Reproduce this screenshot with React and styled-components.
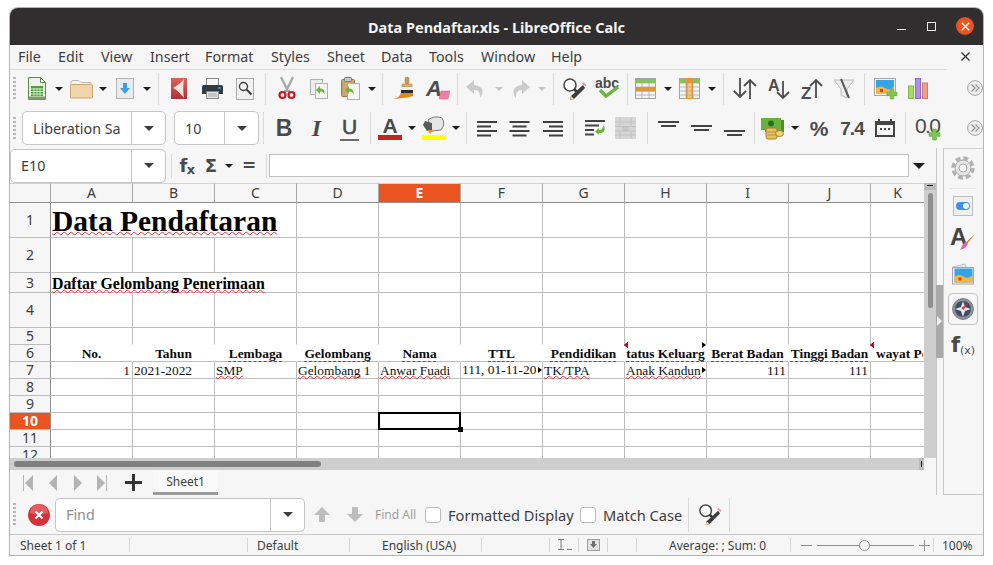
import React from 'react';
import styled, { createGlobalStyle } from 'styled-components';

const UI = '"Noto Sans", "Open Sans", sans-serif';
const SHEET = '"Liberation Serif", serif';

const Global = createGlobalStyle`
  html, body { margin: 0; padding: 0; background: #fff; }
  body { width: 993px; height: 565px; overflow: hidden; font-family: ${UI}; color: #3d3d3d; }
  svg { overflow: visible; }
`;

const Win = styled.div`
  width: 973px;
  height: 547px;
  margin: 8px 0 0 10px;
  display: flex;
  flex-direction: column;
  background: #f6f6f6;
  border-radius: 8px 8px 0 0;
  box-shadow: 0 0 0 1px #b4b4b4;
`;

const TitleBar = styled.header`
  height: 37px;
  flex: none;
  background: #302e2e;
  border-radius: 8px 8px 0 0;
  display: flex;
  align-items: center;
  justify-content: center;
  position: relative;
  color: #f4f4f4;
  font-size: 14.5px;
  font-weight: 700;
`;

const WinControls = styled.div`
  position: absolute;
  top: 0;
  right: 0;
  height: 36px;
  display: flex;
  align-items: center;
`;

const WinButton = styled.span`
  width: 30px;
  display: flex;
  justify-content: center;
`;

const CloseDot = styled.span`
  width: 18px;
  height: 18px;
  margin: 0 9px 0 10px;
  border-radius: 50%;
  background: #e95420;
  display: flex;
  align-items: center;
  justify-content: center;
`;

const MenuBar = styled.nav`
  height: 25px;
  flex: none;
  box-sizing: border-box;
  padding: 0 0 2px 8px;
  display: flex;
  align-items: center;
  position: relative;
  font-size: 14.3px;
  &::after {
    content: '';
    position: absolute;
    left: 0;
    bottom: 0;
    width: 937px;
    height: 1px;
    background: #dcdcdc;
  }
`;

const MenuItem = styled.span`
  width: ${(p) => p.$w}px;
  flex: none;
`;

const MenuClose = styled.span`
  position: absolute;
  right: 13px;
  top: 7px;
  line-height: 0;
`;

const ToolRow = styled.div`
  height: ${(p) => p.$h}px;
  flex: none;
  box-sizing: border-box;
  padding-bottom: ${(p) => p.$pb}px;
  display: flex;
  align-items: center;
  position: relative;
`;

const Grip = styled.span`
  width: 3px;
  height: 23px;
  margin: 0 6px 0 3px;
  flex: none;
  background: repeating-linear-gradient(#b5b5b5 0 2px, transparent 2px 4px);
`;

const Tool = styled.span`
  width: ${(p) => p.$w}px;
  height: 100%;
  flex: none;
  display: flex;
  align-items: center;
  justify-content: center;
  line-height: 0;
`;

const Drop = styled.span`
  width: ${(p) => p.$w}px;
  flex: none;
  display: flex;
  justify-content: center;
  &::before {
    content: '';
    border: ${(p) => (p.$big ? 6 : 4)}px solid transparent;
    border-bottom-width: 0;
    border-top: ${(p) => (p.$big ? 6 : 4)}px solid ${(p) => (p.$muted ? '#c4c4c4' : '#1c1c1c')};
  }
`;

const Sep = styled.span`
  width: ${(p) => p.$w}px;
  height: ${(p) => p.$h || 32}px;
  flex: none;
  display: flex;
  justify-content: center;
  &::before {
    content: '';
    width: 1px;
    background: #dadada;
  }
`;

const More = styled.span`
  position: absolute;
  right: 0;
  top: 10px;
  width: 16px;
  height: 16px;
  line-height: 0;
`;

const Combo = styled.div`
  width: ${(p) => p.$w}px;
  height: 34px;
  flex: none;
  display: flex;
  align-items: stretch;
  background: #fff;
  border: 1px solid #c6c6c6;
  border-radius: 5px;
  box-sizing: border-box;
  margin-left: ${(p) => p.$ml || 0}px;
  font-size: 14.3px;
`;

const ComboText = styled.span`
  flex: 1;
  padding-left: 10px;
  display: flex;
  align-items: center;
  overflow: hidden;
  white-space: nowrap;
  color: ${(p) => p.$color || '#3d3d3d'};
`;

const ComboArrow = styled.span`
  width: ${(p) => p.$w}px;
  flex: none;
  display: flex;
  align-items: center;
  justify-content: center;
  border-left: 1px solid #c6c6c6;
  &::before {
    content: '';
    border: 5px solid transparent;
    border-bottom-width: 0;
    border-top: 5px solid #3d3d3d;
  }
`;

const Glyph = styled.span`
  font-family: ${(p) => p.$font || '"Liberation Sans", sans-serif'};
  font-size: ${(p) => p.$size}px;
  font-weight: ${(p) => p.$weight || 700};
  font-style: ${(p) => (p.$italic ? 'italic' : 'normal')};
  color: ${(p) => p.$color || '#4a4a4a'};
  letter-spacing: ${(p) => p.$ls || 0}px;
  line-height: 1;
  white-space: nowrap;
`;

const Underlined = styled(Glyph)`
  border-bottom: 2px solid #6d6d6d;
  padding: 0 2px 2px;
  font-weight: 400;
  -webkit-text-stroke: 0.6px #4a4a4a;
`;

const Sub = styled.sub`
  font-size: ${(p) => p.$size}px;
  font-weight: ${(p) => p.$weight || 700};
  line-height: 0;
  vertical-align: -2px;
`;

const Workspace = styled.div`
  flex: none;
  height: 347px;
  display: flex;
`;

const LeftPane = styled.div`
  width: 926px;
  flex: none;
  display: flex;
  flex-direction: column;
`;

const FormulaBar = styled.div`
  height: 35px;
  flex: none;
  display: flex;
  align-items: center;
`;

const FormulaInput = styled.div`
  width: 640px;
  height: 23px;
  flex: none;
  background: #fff;
  border: 1px solid #c2c2c2;
  box-sizing: border-box;
`;

const SheetRow = styled.div`
  height: 275px;
  flex: none;
  display: flex;
`;

const Sheet = styled.div`
  width: 914px;
  height: 275px;
  flex: none;
  display: grid;
  grid-template-columns: 41px repeat(10, 82px) 54px;
  grid-template-rows: 20px 35px 35px 20px 35px repeat(8, 17px);
  overflow: hidden;
  background: #fff;
`;

const HeadCell = styled.div`
  box-sizing: border-box;
  display: flex;
  align-items: center;
  justify-content: center;
  font-size: 14px;
  line-height: 1;
  background: ${(p) => (p.$active ? '#e95420' : '#f6f6f6')};
  color: ${(p) => (p.$active ? '#fff' : '#3d3d3d')};
  font-weight: ${(p) => (p.$active ? 700 : 400)};
`;

const ColHead = styled(HeadCell)`
  border-right: 1px solid #a8a8a8;
  border-bottom: 1px solid #8e8e8e;
  border-top: 1px solid #d2d2d2;
`;

const RowHead = styled(HeadCell)`
  border-right: 1px solid #8e8e8e;
  border-bottom: 1px solid #bdbdbd;
`;

const Cell = styled.div`
  position: relative;
  box-sizing: border-box;
  min-width: 0;
  grid-column: ${(p) => (p.$span ? `span ${p.$span}` : 'auto')};
  border-right: 1px solid ${(p) => (p.$noRight ? '#fff' : '#bdbdbd')};
  border-bottom: 1px solid ${(p) => (p.$noBottom ? '#fff' : '#bdbdbd')};
  display: flex;
  align-items: flex-end;
  justify-content: ${(p) => p.$justify || 'flex-start'};
  padding: 0 ${(p) => (p.$justify === 'flex-end' ? 2 : 1)}px 0 1px;
  font-family: ${SHEET};
  font-size: 13.4px;
  line-height: 15px;
  color: #111;
  white-space: nowrap;
`;

const Clip = styled.span`
  overflow: hidden;
  display: block;
  padding-bottom: 1px;
`;

const Title = styled.span`
  align-self: center;
  margin-top: ${(p) => p.$mt}px;
  font-weight: 700;
  font-size: ${(p) => p.$size}px;
  line-height: 1.1;
  color: #000;
  text-decoration: underline wavy #e8343c;
  text-decoration-thickness: 1.3px;
  text-decoration-skip-ink: none;
  text-underline-offset: 0;
`;

const Spell = styled.span`
  text-decoration: underline wavy #e8343c;
  text-decoration-thickness: 1.3px;
  text-decoration-skip-ink: none;
  text-underline-offset: 0;
`;

const Heading = styled.span`
  flex: 1;
  min-width: 0;
  margin-bottom: -1px;
  padding-left: ${(p) => (p.$align ? 4 : 0)}px;
  overflow: hidden;
  text-align: ${(p) => p.$align || 'center'};
  font-weight: 700;
  color: #0b0b0b;
  line-height: 17px;
  text-decoration: ${(p) => (p.$spell ? 'underline dashed #d22' : 'none')};
  text-decoration-thickness: 1px;
  text-underline-offset: 3px;
`;

const Selection = styled.span`
  position: absolute;
  inset: -1px;
  border: 2px solid #000;
  z-index: 2;
  &::after {
    content: '';
    position: absolute;
    right: -4px;
    bottom: -4px;
    width: 5px;
    height: 5px;
    background: #000;
  }
`;

const Mark = styled.span`
  position: absolute;
  top: ${(p) => p.$top}px;
  ${(p) => (p.$left ? 'left: -1px;' : 'right: 0;')}
  border: 3.5px solid transparent;
  ${(p) => (p.$left
    ? 'border-left-width: 0; border-right: 4px solid #d8000c; filter: drop-shadow(0 0 0.5px #000);'
    : 'border-right-width: 0; border-left: 4px solid #000;')}
  z-index: 1;
`;

const VScroll = styled.div`
  width: 12px;
  flex: none;
  background: #cecece;
  position: relative;
`;

const VSplit = styled.span`
  display: block;
  height: 7px;
  background: #bbb;
  position: relative;
  &::after {
    content: '';
    position: absolute;
    left: 3px;
    top: 2px;
    width: 6px;
    height: 1px;
    background: #111;
  }
`;

const VThumb = styled.span`
  display: block;
  width: 5px;
  height: 115px;
  margin: 3px 0 0 4px;
  border-radius: 3px;
  background: #8f8f8f;
`;

const HScroll = styled.div`
  width: 914px;
  height: 12px;
  flex: none;
  background: #cecece;
  display: flex;
  align-items: center;
  padding-left: 4px;
  box-sizing: border-box;
  position: relative;
`;

const HThumb = styled.span`
  width: 307px;
  height: 6px;
  border-radius: 3px;
  background: #808080;
`;

const HSplit = styled.span`
  position: absolute;
  right: 0;
  top: 0;
  width: 5px;
  height: 12px;
  background: #bbb;
  &::after {
    content: '';
    position: absolute;
    left: 2px;
    top: 3px;
    width: 1px;
    height: 6px;
    background: #111;
  }
`;

const TabBar = styled.div`
  height: 25px;
  flex: none;
  padding-left: 5px;
  display: flex;
  align-items: center;
`;

const SheetTab = styled.div`
  width: 65px;
  height: 25px;
  flex: none;
  box-sizing: border-box;
  background: #f9f9f9;
  border-bottom: 3px solid #9a9a9a;
  display: flex;
  align-items: center;
  justify-content: center;
  font-size: 12px;
`;

const Splitter = styled.div`
  width: 6px;
  flex: none;
  position: relative;
  border-left: 1px solid #c8c8c8;
  &::before {
    content: '';
    position: absolute;
    left: -1px;
    right: 0;
    top: 137px;
    height: 73px;
    background: #a9a9a9;
  }
  &::after {
    content: '';
    position: absolute;
    left: 0;
    top: 168px;
    border: 5px solid transparent;
    border-right-width: 0;
    border-left: 5px solid #f2f2f2;
  }
`;

const Sidebar = styled.aside`
  flex: 1;
  border-left: 1px solid #c8c8c8;
  border-top: 1px solid #d0d0d0;
  border-bottom: 1px solid #c8c8c8;
  display: flex;
  flex-direction: column;
  align-items: center;
  padding-right: 1px;
`;

const SideButton = styled.span`
  width: 30px;
  height: ${(p) => p.$h}px;
  margin-top: ${(p) => p.$mt || 0}px;
  flex: none;
  box-sizing: border-box;
  display: flex;
  align-items: center;
  justify-content: center;
  line-height: 1;
  border-radius: 4px;
  border: 1px solid ${(p) => (p.$active ? '#c6c6c6' : 'transparent')};
`;

const SideRule = styled.span`
  width: 26px;
  height: 1px;
  margin: 6px 0 2px;
  background: #e2e2e2;
`;

const FindBar = styled.div`
  height: 40px;
  flex: none;
  box-sizing: border-box;
  border-bottom: 1px solid #c8c8c8;
  display: flex;
  align-items: center;
  font-size: 14px;
`;

const Check = styled.span`
  width: 16px;
  height: 16px;
  margin: 0 7px 0 ${(p) => p.$ml}px;
  flex: none;
  box-sizing: border-box;
  background: #fff;
  border: 1px solid #bcbcbc;
  border-radius: 3px;
`;

const FindLabel = styled.span`
  width: ${(p) => p.$w}px;
  padding-left: ${(p) => p.$pad || 0}px;
  flex: none;
  box-sizing: border-box;
  white-space: nowrap;
  font-size: ${(p) => p.$size || 14.6}px;
  color: ${(p) => p.$color || '#3d3d3d'};
`;

const StatusBar = styled.footer`
  flex: 1;
  display: flex;
  align-items: center;
  font-size: 12px;
`;

const Segment = styled.div`
  width: ${(p) => p.$w}px;
  height: 14px;
  flex: none;
  box-sizing: border-box;
  display: flex;
  align-items: center;
  justify-content: ${(p) => p.$justify || 'flex-start'};
  padding-left: ${(p) => p.$pad || 0}px;
  border-right: ${(p) => (p.$last ? 0 : '1px solid #d6d6d6')};
  white-space: nowrap;
`;

const ZoomTrack = styled.span`
  width: 97px;
  height: 1px;
  margin: 0 5px;
  background: #8e8e8e;
  position: relative;
  &::after {
    content: '';
    position: absolute;
    left: 42px;
    top: -5px;
    width: 9px;
    height: 9px;
    border-radius: 50%;
    background: #f4f4f4;
    border: 1px solid #909090;
  }
`;

/* ---- drawings ---- */

const GreenPlus = ({ x, y, s = 9 }) => {
  const a = s * 0.33;
  const b = s * 0.34;
  return (
    <path
      d={`M${x + a} ${y}h${b}v${a}h${a}v${b}h-${a}v${a}h-${b}v-${a}h-${a}v-${b}h${a}z`}
      fill="#7ec850"
      stroke="#5fa638"
      strokeWidth=".6"
    />
  );
};

const NewCalc = () => (
  <svg width="18" height="23" viewBox="0 0 18 23">
    <path d="M.5.5h12l5 5v17H.5z" fill="#eef5e6" stroke="#5f8a4a" />
    <path d="M12.5.5v5h5z" fill="#fff" stroke="#5f8a4a" />
    <rect x="1" y="19.5" width="16" height="3" fill="#7aa265" />
    <rect x="3" y="9" width="12" height="10" fill="#4f9f3d" />
    <path d="M3 12h12M3 14.5h12M3 17h12M6 11v8M9 11v8M12 11v8" stroke="#e6f4db" strokeWidth=".8" />
  </svg>
);

const Folder = () => (
  <svg width="23" height="20" viewBox="0 0 23 20">
    <path d="M1 3.500q0-2 2-2h6l2 2h10v3H1z" fill="#f3f3f1" stroke="#bdbdb8" />
    <rect x=".5" y="5.500" width="22" height="13.500" rx="1" fill="#efd5a9" stroke="#c9a873" />
  </svg>
);

const SaveIcon = () => (
  <svg width="18" height="21" viewBox="0 0 18 21">
    <rect x=".5" y=".5" width="17" height="20" fill="#e9ecee" stroke="#b3b3b3" />
    <path d="M7 5h4v5h3l-5 6-5-6h3z" fill="#3d9fe6" />
  </svg>
);

const PdfIcon = () => (
  <svg width="16" height="21" viewBox="0 0 16 21">
    <defs>
      <linearGradient id="pdfg" x1="0" y1="0" x2="0" y2="1">
        <stop offset="0" stopColor="#e0625c" />
        <stop offset="1" stopColor="#b0303a" />
      </linearGradient>
    </defs>
    <rect width="16" height="21" fill="url(#pdfg)" />
    <path d="M13 1C9 6 5 8 2 10c4 2 8 6 11 10-1-5-1-14 0-19z" fill="#f8e2da" />
  </svg>
);

const PrintIcon = () => (
  <svg width="21" height="21" viewBox="0 0 21 21">
    <rect x="4.500" y=".5" width="12" height="7" fill="#f5f5f5" stroke="#8a8a8a" />
    <path d="M0 9q0-2 2-2h17q2 0 2 2v7H0z" fill="#333a40" />
    <rect x="16.500" y="9" width="2" height="2" fill="#27b5e6" />
    <rect x="4.500" y="13.500" width="12" height="7" fill="#e4e4e4" stroke="#8a8a8a" />
    <path d="M6 16h9M6 18h9" stroke="#a5a5a5" />
  </svg>
);

const PreviewIcon = () => (
  <svg width="18" height="22" viewBox="0 0 18 22">
    <rect x=".5" y=".5" width="17" height="21" fill="#f1f1f1" stroke="#ababab" />
    <circle cx="7.500" cy="8.500" r="4" fill="#f8f8f8" stroke="#3d3d3d" strokeWidth="1.4" />
    <path d="M10.500 11.500l5 5" stroke="#3d3d3d" strokeWidth="2" />
  </svg>
);

const CutIcon = () => (
  <svg width="18" height="23" viewBox="0 0 18 23">
    <path d="M3 0l6.400 13M15 0L8.600 13" stroke="#a9a9a9" strokeWidth="2.400" fill="none" />
    <path d="M6 14h6" stroke="#555" />
    <circle cx="4.500" cy="18" r="3" fill="none" stroke="#c8171f" strokeWidth="2.200" />
    <circle cx="13.500" cy="18" r="3" fill="none" stroke="#c8171f" strokeWidth="2.200" />
  </svg>
);

const GreenSwoosh = ({ x, y }) => (
  <path
    transform={`translate(${x} ${y})`}
    d="M4 0v2.500c3 0 5 2 4.500 6C7.500 6 6 5.300 4 5.500V8L0 4z"
    fill="#6fb53c"
  />
);

const CopyIcon = () => (
  <svg width="18" height="20" viewBox="0 0 18 20">
    <rect x=".5" y=".5" width="12" height="15" fill="#eee" stroke="#b0b0b0" />
    <rect x="5.500" y="4.500" width="12" height="15" fill="#f6f6f6" stroke="#b0b0b0" />
    <GreenSwoosh x="6" y="7" />
  </svg>
);

const PasteIcon = () => (
  <svg width="19" height="23" viewBox="0 0 19 23">
    <rect x=".5" y="2.500" width="13" height="17" rx="1" fill="#cfa66b" stroke="#96754a" />
    <rect x="3.500" y=".5" width="7" height="4" rx="1" fill="#c8c8c8" stroke="#777" />
    <rect x="6.500" y="6.500" width="12" height="16" fill="#f6f6f6" stroke="#b0b0b0" />
    <GreenSwoosh x="4" y="9" />
  </svg>
);

const BrushIcon = () => (
  <svg width="20" height="23" viewBox="0 0 20 23">
    <rect x="11" y="0" width="4" height="7" rx="2" fill="#c89a5a" stroke="#9a7338" strokeWidth=".5" />
    <path d="M8 7h10v3H8z" fill="#d8b070" stroke="#9a7338" strokeWidth=".5" />
    <path d="M7 10h12v3H7z" fill="#f1eee6" />
    <path d="M7 13h12v3H7z" fill="#2b2b2b" />
    <path d="M7 16h12v3c-4 1-7 2-10 2l-9 1c4-1 6-3 7-6z" fill="#e8861b" />
  </svg>
);

const ClearIcon = () => (
  <svg width="24" height="22" viewBox="0 0 24 22">
    <text x="0" y="18" fontFamily="Liberation Sans, sans-serif" fontWeight="700" fontStyle="italic" fontSize="22" fill="#4d4d4d">A</text>
    <path d="M13 21l2-8h9l-2 8z" fill="#f27ea7" stroke="#e65b90" strokeWidth=".5" />
  </svg>
);

const UndoIcon = ({ flip }) => (
  <svg width="19" height="20" viewBox="0 0 19 20">
    <g transform={flip ? 'matrix(-1 0 0 1 19 0)' : undefined}>
      <path d="M8 1L0 8l8 7v-4c4 0 6 1 6 8 4-5 4-12-6-13z" fill="#cbcbcb" />
    </g>
  </svg>
);

const FindIcon = ({ w = 24 }) => (
  <svg width={w} height={w} viewBox="0 0 24 24">
    <circle cx="8" cy="8" r="6" fill="#fff" stroke="#4a4a4a" strokeWidth="1.600" />
    <path d="M12 12l4 4" stroke="#3a3a3a" strokeWidth="2.600" />
    <path d="M21 8l2 3-11 11-4 1 1-4z" fill="#3c3c3c" />
    <path d="M20 6.500l3.500 3 1-1.500-3-3z" fill="#ec8fc0" />
    <path d="M9 19l3 3-4 1z" fill="#f1d98a" />
  </svg>
);

const SpellIcon = () => (
  <svg width="25" height="25" viewBox="0 0 25 25">
    <text x="0" y="12" fontFamily="Liberation Sans, sans-serif" fontWeight="700" fontSize="14" fill="#4a4a4a">abc</text>
    <path d="M5 14l6 6L23 11" fill="none" stroke="#6fb53c" strokeWidth="3.400" />
  </svg>
);

const TableIcon = ({ cols }) => (
  <svg width="21" height="21" viewBox="0 0 21 21">
    <rect x=".5" y=".5" width="20" height="20" fill="#f3f3f3" stroke="#a5a5a5" />
    <rect x="1" y="1" width="19" height="4" fill="#7ec850" />
    {cols
      ? <rect x="7" y="0" width="7" height="21" fill="#f0941d" />
      : <rect x="0" y="9" width="21" height="4.500" fill="#f0941d" />}
    {cols && <rect x="8.500" y="5" width="4" height="15" fill="#f9c67a" />}
    <path d="M0 5h21M0 9h21M0 13h21M0 17h21M7 0v21M14 0v21" stroke="#a5a5a5" strokeWidth=".7" />
  </svg>
);

const arrowStroke = { fill: 'none', stroke: '#4d4d4d', strokeWidth: 1.8 };

const SortIcon = () => (
  <svg width="24" height="21" viewBox="0 0 24 21">
    <path d="M7 0v19M1 13l6 6 6-6" {...arrowStroke} />
    <path d="M17 21V2M11 8l6-6 6 6" {...arrowStroke} />
  </svg>
);

const SortAscIcon = () => (
  <svg width="23" height="22" viewBox="0 0 23 22">
    <text x="0" y="13" fontFamily="Liberation Sans, sans-serif" fontWeight="700" fontSize="16" fill="#4d4d4d">A</text>
    <path d="M15 3v17M9 14l6 6 6-6" {...arrowStroke} />
  </svg>
);

const SortDescIcon = () => (
  <svg width="23" height="22" viewBox="0 0 23 22">
    <text x="0" y="21" fontFamily="Liberation Sans, sans-serif" fontWeight="700" fontSize="17" fill="#4d4d4d">Z</text>
    <path d="M15 20V2M9 8l6-6 6 6" {...arrowStroke} />
  </svg>
);

const FilterIcon = () => (
  <svg width="20" height="20" viewBox="0 0 20 20">
    <path d="M0 1h20l-7 9v9l-6-3v-6z" fill="#ececec" stroke="#bdbdbd" />
    <path d="M7 0l8 19" stroke="#5a5a5a" strokeWidth="2" />
  </svg>
);

const Landscape = () => (
  <>
    <rect x="2" y="2" width="18" height="14" fill="#35a4e6" />
    <path d="M2 10q5-3 9 0t9-1v7H2z" fill="#f3b545" />
    <path d="M6 11h3v3H6z" fill="#d8412c" />
  </>
);

const ImageIcon = () => (
  <svg width="23" height="21" viewBox="0 0 23 21">
    <rect x=".5" y=".5" width="21" height="17" fill="#f1f1f1" stroke="#a5a5a5" />
    <Landscape />
    <GreenPlus x={13} y={11} s={10} />
  </svg>
);

const ChartIcon = () => (
  <svg width="21" height="21" viewBox="0 0 21 21">
    <rect x=".5" y="8" width="5" height="12.500" fill="#a6d96a" stroke="#86b84c" />
    <rect x="7.500" y=".5" width="5" height="20" fill="#b18fe0" stroke="#8f6cc4" />
    <rect x="14.500" y="5" width="5" height="15.500" fill="#ee9c8c" stroke="#cf7a6c" />
  </svg>
);

const MoreIcon = () => (
  <svg width="16" height="16" viewBox="0 0 16 16">
    <circle cx="8" cy="8" r="7.400" fill="#ededed" stroke="#a8a8a8" />
    <path d="M4.500 4.500L8 8l-3.500 3.500M8.500 4.500L12 8l-3.500 3.500" fill="none" stroke="#8c8c8c" strokeWidth="1.100" />
  </svg>
);

const FontColorIcon = () => (
  <svg width="24" height="24" viewBox="0 0 24 24">
    <text x="12" y="17" textAnchor="middle" fontFamily="Liberation Sans, sans-serif" fontWeight="700" fontSize="21" fill="#4a4a4a">A</text>
    <rect y="19" width="24" height="5" fill="#c9211e" />
  </svg>
);

const HighlightIcon = () => (
  <svg width="24" height="24" viewBox="0 0 24 24">
    <path d="M6 4q6-5 14-2 4 6-1 12l-9 1z" fill="#e6e6e6" stroke="#7b7b7b" />
    <path d="M3 5l7 2v7l-5 1-4-6z" fill="#5a5a5a" />
    <path d="M6 14l5 0-3 4z" fill="#ee8a1e" />
    <rect y="19" width="24" height="5" fill="#ffff00" />
  </svg>
);

const AlignIcon = ({ mode }) => {
  const widths = [20, 14, 20, 14];
  return (
    <svg width="21" height="16" viewBox="0 0 21 16">
      {widths.map((w, i) => {
        const x = mode === 'left' ? 0 : mode === 'right' ? 21 - w : (21 - w) / 2;
        return <rect key={i} x={x} y={i * 4.5 + 1} width={w} height="2" fill="#3f3f3f" />;
      })}
    </svg>
  );
};

const WrapIcon = () => (
  <svg width="21" height="16" viewBox="0 0 21 16">
    <rect width="20" height="2" y="0" fill="#444" />
    <rect width="14" height="2" y="4.500" fill="#444" />
    <rect width="9" height="2" y="9" fill="#444" />
    <rect width="9" height="2" y="13.500" fill="#444" />
    <path d="M18 5c3 3 2 9-4 8v2l-4-3.500L14 8v2c3 0 4-2 4-5z" fill="#6fb53c" />
  </svg>
);

const MergeIcon = () => (
  <svg width="21" height="22" viewBox="0 0 21 22">
    <rect width="21" height="22" fill="#d6d6d6" />
    <path d="M0 5h21M0 9.500h21M0 14h21M0 18h21M5 0v9M16 0v9M5 14v8M16 14v8" stroke="#c2c2c2" />
    <text x="10.500" y="14" textAnchor="middle" fontSize="6" fontFamily="Liberation Sans, sans-serif" fill="#b5b5b5">00</text>
  </svg>
);

const VAlignIcon = ({ y }) => (
  <svg width="21" height="16" viewBox="0 0 21 16">
    <rect x="0" y={y} width="21" height="2" fill="#444" />
    <rect x="3" y={y + 4} width="15" height="2" fill="#444" />
  </svg>
);

const CurrencyIcon = () => (
  <svg width="23" height="21" viewBox="0 0 23 21">
    <rect x="4" y="2" width="19" height="12" fill="#4c8f2f" />
    <rect x="0" y="0" width="20" height="12" fill="#69b33c" />
    <circle cx="10" cy="5.500" r="3" fill="#2f6d1e" />
    <rect x="5" y="10" width="11" height="11" rx="2" fill="#e6c35a" stroke="#9d8231" />
    <path d="M6 14h9M6 17h9" stroke="#9d8231" strokeWidth=".7" />
    <ellipse cx="18.500" cy="15.500" rx="4" ry="3" fill="#eed27a" stroke="#9d8231" />
  </svg>
);

const DateIcon = () => (
  <svg width="20" height="18" viewBox="0 0 20 18">
    <path d="M0 2h3V0h2v2h10V0h2v2h3v16H0z" fill="#444" />
    <rect x="2" y="6" width="16" height="10" fill="#f6f6f6" />
    <path d="M5 9h2v2H5zM9 9h2v2H9zM13 9h2v2h-2z" fill="#444" />
  </svg>
);

const AddDecimal = () => (
  <svg width="26" height="26" viewBox="0 0 26 26">
    <text x="0" y="18" fontFamily="Liberation Sans, sans-serif" fontSize="21" letterSpacing="-1.600" fill="#4a4a4a">0.0</text>
    <GreenPlus x={14} y={14} s={11} />
  </svg>
);

const GearIcon = () => (
  <svg width="24" height="24" viewBox="0 0 24 24">
    <circle cx="12" cy="12" r="10" fill="none" stroke="#b2b2b2" strokeWidth="3.400" strokeDasharray="5 2.850" />
    <circle cx="12" cy="12" r="8" fill="#e6e6e6" stroke="#a8a8a8" />
    <circle cx="12" cy="12" r="4" fill="#f8f8f8" stroke="#a8a8a8" />
  </svg>
);

const PropsIcon = () => (
  <svg width="20" height="20" viewBox="0 0 20 20">
    <rect x=".5" y=".5" width="19" height="19" fill="#eef0f2" stroke="#bdbdbd" />
    <rect x="3" y="6" width="14" height="8" rx="4" fill="#3f8fe8" />
    <circle cx="13" cy="10" r="3" fill="#fff" />
  </svg>
);

const StylesIcon = () => (
  <svg width="24" height="24" viewBox="0 0 24 24">
    <text x="-1" y="18" fontFamily="Liberation Sans, sans-serif" fontWeight="700" fontSize="24" fill="#444">A</text>
    <path d="M24 7l-8 10-2-1z" fill="#c58b3e" />
    <path d="M14 15l3 2-3 4-5 2 2-4z" fill="#d75fc8" />
  </svg>
);

const GalleryIcon = () => (
  <svg width="24" height="21" viewBox="0 0 24 21">
    <path d="M2 3l12-3 2 5H5z" fill="#dfe6ec" stroke="#a8a8a8" strokeWidth=".6" />
    <rect x="1.500" y="3.500" width="21" height="16.500" fill="#f4f4f4" stroke="#a5a5a5" />
    <g transform="translate(1.500 2.500)"><Landscape /></g>
  </svg>
);

const NavigatorIcon = () => (
  <svg width="22" height="22" viewBox="0 0 22 22">
    <circle cx="11" cy="11" r="10.400" fill="#8f949c" stroke="#77797d" />
    <circle cx="11" cy="11" r="8" fill="#3f4c66" />
    <path d="M11 3l2 6 6 2-6 2-2 6-2-6-6-2 6-2z" fill="#e7e7e7" />
    <path d="M16 5l-4.500 7L9.500 10z" fill="#d8333a" />
  </svg>
);

const CloseBadge = () => (
  <svg width="22" height="22" viewBox="0 0 22 22">
    <circle cx="11" cy="11" r="11" fill="#d5303a" />
    <path d="M2 9a9 9 0 0 1 18 0q-9 3-18 0z" fill="#e25c63" />
    <path d="M7.500 7.500l7 7M14.500 7.500l-7 7" stroke="#fff" strokeWidth="2.200" />
  </svg>
);

const TabNav = ({ d, bar }) => (
  <svg width="10" height="16" viewBox="0 0 10 16">
    <path d={d} fill="#b4b4b4" />
    {bar !== undefined && <rect x={bar} y="0" width="1" height="16" fill="#b4b4b4" />}
  </svg>
);

const BigPlus = () => (
  <svg width="17" height="17" viewBox="0 0 17 17">
    <path d="M7 0h3v7h7v3h-7v7H7v-7H0V7h7z" fill="#333" />
  </svg>
);

const FindArrow = ({ down }) => (
  <svg width="16" height="15" viewBox="0 0 16 15">
    <g transform={down ? 'matrix(1 0 0 -1 0 15)' : undefined}>
      <path d="M8 0l8 8h-5v7H5V8H0z" fill="#bdbdbd" />
    </g>
  </svg>
);

/* ---- data ---- */

const COLS = ['A', 'B', 'C', 'D', 'E', 'F', 'G', 'H', 'I', 'J', 'K'];
const ROWS = [1, 2, 3, 4, 5, 6, 7, 8, 9, 10, 11, 12];
const MENU = [
  ['File', 40], ['Edit', 43], ['View', 49], ['Insert', 55], ['Format', 66], ['Styles', 56],
  ['Sheet', 54], ['Data', 48], ['Tools', 52], ['Window', 70], ['Help', 60],
];
const HEADINGS = [
  { text: 'No.' }, { text: 'Tahun' }, { text: 'Lembaga', spell: true }, { text: 'Gelombang', spell: true },
  { text: 'Nama', spell: true }, { text: 'TTL', spell: true }, { text: 'Pendidikan', spell: true },
  { text: 'tatus Keluarg', spell: true, note: true, clip: true },
  { text: 'Berat Badan', spell: true }, { text: 'Tinggi Badan', spell: true },
  { text: 'wayat Pe', note: true, align: 'left' },
];

const renderRow = (row) => {
  if (row === 1 || row === 3) {
    return [
      <Cell key="t" $span={3}>
        {row === 1
          ? <Title $size={29.5} $mt={3}>Data Pendaftaran</Title>
          : <Title $size={15.85} $mt={2}>Daftar Gelombang Penerimaan</Title>}
      </Cell>,
      ...COLS.slice(3).map((c) => <Cell key={c} />),
    ];
  }
  if (row === 6) {
    return HEADINGS.map((h, i) => (
      <Cell key={COLS[i]} $noRight={i < 10}>
        {h.note && <Mark $left $top={-3} />}
        {h.clip && <Mark $top={-3} />}
        <Heading $spell={h.spell} $align={h.align}>{h.text}</Heading>
      </Cell>
    ));
  }
  if (row === 7) {
    return [
      <Cell key="A" $justify="flex-end">1</Cell>,
      <Cell key="B">2021-2022</Cell>,
      <Cell key="C"><Spell>SMP</Spell></Cell>,
      <Cell key="D"><Spell>Gelombang</Spell>&nbsp;1</Cell>,
      <Cell key="E"><Spell>Anwar Fuadi</Spell></Cell>,
      <Cell key="F"><Clip>111, 01-11-20</Clip><Mark $top={5} /></Cell>,
      <Cell key="G"><Spell>TK/TPA</Spell></Cell>,
      <Cell key="H"><Spell>Anak Kandun</Spell><Mark $top={5} /></Cell>,
      <Cell key="I" $justify="flex-end">111</Cell>,
      <Cell key="J" $justify="flex-end">111</Cell>,
      <Cell key="K" />,
    ];
  }
  return COLS.map((c) => (
    <Cell key={c} $noBottom={row === 5}>
      {row === 10 && c === 'E' && <Selection />}
    </Cell>
  ));
};

const App = () => (
  <>
    <Global />
    <Win>
      <TitleBar>
        Data Pendaftar.xls - LibreOffice Calc
        <WinControls>
          <WinButton>
            <svg width="9" height="9" viewBox="0 0 9 9"><rect y="7" width="9" height="1" fill="#f0f0f0" /></svg>
          </WinButton>
          <WinButton>
            <svg width="9" height="9" viewBox="0 0 9 9"><rect x=".5" y=".5" width="8" height="8" fill="none" stroke="#f0f0f0" /></svg>
          </WinButton>
          <CloseDot>
            <svg width="9" height="9" viewBox="0 0 9 9"><path d="M.8.8l7.400 7.400M8.200.8L.8 8.200" stroke="#fff" strokeWidth="1.400" /></svg>
          </CloseDot>
        </WinControls>
      </TitleBar>

      <MenuBar>
        {MENU.map(([label, w]) => <MenuItem key={label} $w={w}>{label}</MenuItem>)}
        <MenuClose>
          <svg width="9" height="9" viewBox="0 0 9 9"><path d="M.5.5l8 8M8.500.5l-8 8" stroke="#333" strokeWidth="1.300" /></svg>
        </MenuClose>
      </MenuBar>

      <ToolRow $h={40} $pb={3}>
        <Grip />
        <Tool $w={30}><NewCalc /></Tool>
        <Drop $w={14} />
        <Tool $w={30}><Folder /></Tool>
        <Drop $w={14} />
        <Tool $w={30}><SaveIcon /></Tool>
        <Drop $w={14} />
        <Sep $w={8} />
        <Tool $w={34}><PdfIcon /></Tool>
        <Tool $w={32}><PrintIcon /></Tool>
        <Tool $w={34}><PreviewIcon /></Tool>
        <Sep $w={6} />
        <Tool $w={37}><CutIcon /></Tool>
        <Tool $w={28}><CopyIcon /></Tool>
        <Tool $w={34}><PasteIcon /></Tool>
        <Drop $w={10} />
        <Sep $w={10} />
        <Tool $w={33}><BrushIcon /></Tool>
        <Tool $w={36}><ClearIcon /></Tool>
        <Sep $w={2} />
        <Tool $w={34}><UndoIcon /></Tool>
        <Drop $w={14} $muted />
        <Tool $w={28}><UndoIcon flip /></Tool>
        <Drop $w={16} $muted />
        <Sep $w={6} />
        <Tool $w={36}><FindIcon /></Tool>
        <Tool $w={30}><SpellIcon /></Tool>
        <Sep $w={10} />
        <Tool $w={27}><TableIcon /></Tool>
        <Drop $w={18} />
        <Tool $w={24}><TableIcon cols /></Tool>
        <Drop $w={21} />
        <Sep $w={2} />
        <Tool $w={41}><SortIcon /></Tool>
        <Tool $w={28}><SortAscIcon /></Tool>
        <Tool $w={38}><SortDescIcon /></Tool>
        <Tool $w={26}><FilterIcon /></Tool>
        <Sep $w={14} />
        <Tool $w={28}><ImageIcon /></Tool>
        <Tool $w={38}><ChartIcon /></Tool>
        <More><MoreIcon /></More>
      </ToolRow>

      <ToolRow $h={38} $pb={2}>
        <Grip />
        <Combo $w={144}>
          <ComboText>Liberation Sa</ComboText>
          <ComboArrow $w={33} />
        </Combo>
        <Combo $w={85} $ml={8}>
          <ComboText>10</ComboText>
          <ComboArrow $w={33} />
        </Combo>
        <Sep $w={8} />
        <Tool $w={34}><Glyph $size={23}>B</Glyph></Tool>
        <Tool $w={31}><Glyph $size={24} $font={'"Liberation Serif", serif'} $italic>I</Glyph></Tool>
        <Tool $w={35}><Underlined $size={21}>U</Underlined></Tool>
        <Sep $w={6} />
        <Tool $w={33}><FontColorIcon /></Tool>
        <Drop $w={11} />
        <Tool $w={33}><HighlightIcon /></Tool>
        <Drop $w={11} />
        <Sep $w={11} />
        <Tool $w={30}><AlignIcon mode="left" /></Tool>
        <Tool $w={34}><AlignIcon mode="center" /></Tool>
        <Tool $w={32}><AlignIcon mode="right" /></Tool>
        <Sep $w={10} />
        <Tool $w={34}><WrapIcon /></Tool>
        <Tool $w={26}><MergeIcon /></Tool>
        <Sep $w={18} />
        <Tool $w={24}><VAlignIcon y={1} /></Tool>
        <Tool $w={42}><VAlignIcon y={5} /></Tool>
        <Tool $w={24}><VAlignIcon y={10} /></Tool>
        <Sep $w={16} />
        <Tool $w={20}><CurrencyIcon /></Tool>
        <Drop $w={26} />
        <Tool $w={22}><Glyph $size={21}>%</Glyph></Tool>
        <Tool $w={44}><Glyph $size={19} $ls={-1}>7.4</Glyph></Tool>
        <Tool $w={22}><DateIcon /></Tool>
        <Sep $w={18} />
        <Tool $w={28}><AddDecimal /></Tool>
        <More><MoreIcon /></More>
      </ToolRow>

      <Workspace>
        <LeftPane>
          <FormulaBar>
            <Combo $w={156}>
              <ComboText>E10</ComboText>
              <ComboArrow $w={33} />
            </Combo>
            <Sep $w={10} $h={24} />
            <Tool $w={22}>
              <Glyph $size={18} $font={'"DejaVu Sans", sans-serif'} $ls={-0.5}>f<Sub $size={13}>x</Sub></Glyph>
            </Tool>
            <Tool $w={26}><Glyph $size={18} $font={'"DejaVu Sans", sans-serif'}>Σ</Glyph></Tool>
            <Drop $w={10} />
            <Tool $w={30}><Glyph $size={17} $font={'"DejaVu Sans", sans-serif'}>=</Glyph></Tool>
            <Sep $w={5} $h={24} />
            <FormulaInput />
            <Drop $w={20} $big />
          </FormulaBar>

          <SheetRow>
            <Sheet>
              <ColHead />
              {COLS.map((c) => <ColHead key={c} $active={c === 'E'}>{c}</ColHead>)}
              {ROWS.map((r) => (
                <React.Fragment key={r}>
                  <RowHead $active={r === 10}>{r}</RowHead>
                  {renderRow(r)}
                </React.Fragment>
              ))}
            </Sheet>
            <VScroll>
              <VSplit />
              <VThumb />
            </VScroll>
          </SheetRow>

          <HScroll>
            <HThumb />
            <HSplit />
          </HScroll>

          <TabBar>
            <Tool $w={25}><TabNav d="M10 0v16L2 8z" bar={0} /></Tool>
            <Tool $w={25}><TabNav d="M9 0v16L1 8z" /></Tool>
            <Tool $w={25}><TabNav d="M1 0v16l8-8z" /></Tool>
            <Tool $w={24}><TabNav d="M0 0v16l8-8z" bar={9} /></Tool>
            <Tool $w={39}><BigPlus /></Tool>
            <SheetTab>Sheet1</SheetTab>
          </TabBar>
        </LeftPane>

        <Splitter />

        <Sidebar>
          <SideButton $h={28} $mt={5}><GearIcon /></SideButton>
          <SideRule />
          <SideButton $h={30}><PropsIcon /></SideButton>
          <SideButton $h={36}><StylesIcon /></SideButton>
          <SideButton $h={35}><GalleryIcon /></SideButton>
          <SideButton $h={32} $active $mt={1}><NavigatorIcon /></SideButton>
          <SideButton $h={40}>
            <Glyph $size={21} $font={'"DejaVu Sans", sans-serif'}>f<Sub $size={11} $weight={400}>(x)</Sub></Glyph>
          </SideButton>
        </Sidebar>
      </Workspace>

      <FindBar>
        <Grip />
        <Tool $w={33}><CloseBadge /></Tool>
        <Combo $w={250}>
          <ComboText $color="#8e8e8e">Find</ComboText>
          <ComboArrow $w={33} />
        </Combo>
        <Tool $w={34}><FindArrow /></Tool>
        <Tool $w={32}><FindArrow down /></Tool>
        <FindLabel $w={56} $size={12} $pad={4} $color="#a0a0a0">Find All</FindLabel>
        <Check $ml={-2} />
        <FindLabel $w={132}>Formatted Display</FindLabel>
        <Check $ml={0} />
        <FindLabel $w={85}>Match Case</FindLabel>
        <Sep $w={1} $h={34} />
        <Tool $w={40}><FindIcon w={23} /></Tool>
        <Sep $w={1} $h={34} />
      </FindBar>

      <StatusBar>
        <Segment $w={120} $pad={10}>Sheet 1 of 1</Segment>
        <Segment $w={118} />
        <Segment $w={102} $pad={9}>Default</Segment>
        <Segment $w={132} $pad={32}>English (USA)</Segment>
        <Segment $w={68} />
        <Segment $w={29} $justify="center">
          <svg width="16" height="12" viewBox="0 0 16 12"><path d="M2 .5h6M2 10.500h6M5 .5v10M11 10.500h5" stroke="#7a7a7a" /></svg>
        </Segment>
        <Segment $w={29} $justify="center">
          <svg width="13" height="12" viewBox="0 0 13 12"><rect x=".5" y=".5" width="12" height="11" fill="#e2e2e2" stroke="#9c9c9c" /><path d="M5 2h3v3h2l-3.500 4L3 5h2z" fill="#6f6f6f" /></svg>
        </Segment>
        <Segment $w={29} />
        <Segment $w={154} $pad={32}>Average: ; Sum: 0</Segment>
        <Segment $w={143} $pad={10}>
          <svg width="11" height="1" viewBox="0 0 11 1"><rect width="11" height="1" fill="#8e8e8e" /></svg>
          <ZoomTrack />
          <svg width="11" height="11" viewBox="0 0 11 11"><path d="M5 0h1v5h5v1H6v5H5V6H0V5h5z" fill="#8e8e8e" /></svg>
        </Segment>
        <Segment $w={38} $pad={8} $last>100%</Segment>
      </StatusBar>
    </Win>
  </>
);

export default App;
